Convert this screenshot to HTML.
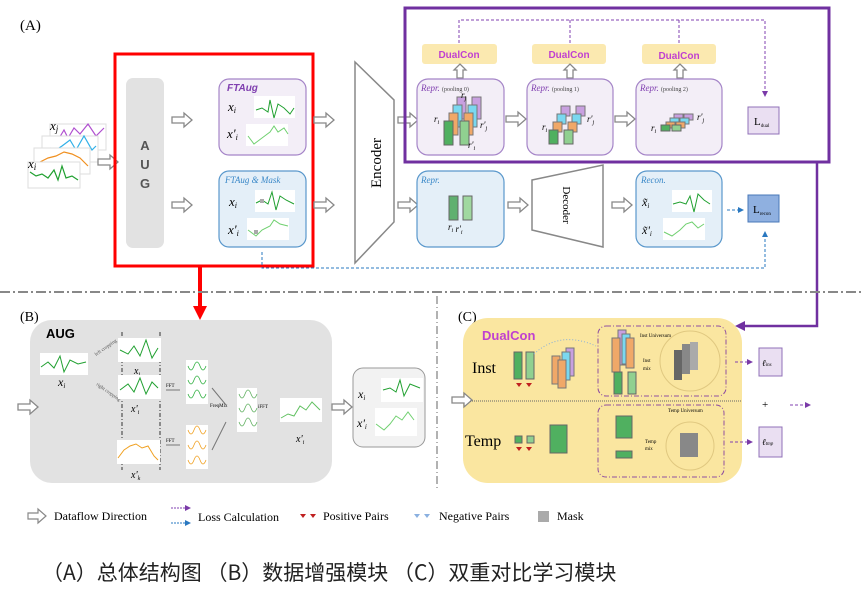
<!DOCTYPE html>
<html><head><meta charset="utf-8"><style>
html,body{margin:0;padding:0;background:#fff;}
svg{display:block;font-family:"Liberation Serif",serif;}
.sans{font-family:"Liberation Sans",sans-serif;}
</style></head><body>
<svg width="864" height="592" viewBox="0 0 864 592" xmlns="http://www.w3.org/2000/svg">
<defs>
<marker id="pa" markerWidth="6" markerHeight="6" refX="5" refY="3" orient="auto"><path d="M0,0 L6,3 L0,6z" fill="#7a3aa8"/></marker>
<marker id="ba" markerWidth="6" markerHeight="6" refX="5" refY="3" orient="auto"><path d="M0,0 L6,3 L0,6z" fill="#2a78c0"/></marker>
<g id="harr"><path d="M0,-3 H12 V-7 L20,0 L12,7 V3 H0z" fill="#fff" stroke="#888" stroke-width="1.3"/></g>
<g id="uarr"><path d="M-3,8 V0 H-6 L0,-6 L6,0 H3 V8z" fill="#fff" stroke="#888" stroke-width="1.3"/></g>
</defs>

<text x="20" y="30" font-size="15">(A)</text>

<g>
<rect x="50" y="124" width="56" height="26" fill="#fff" stroke="#ddd"/>
<polyline points="58,140 64,130 68,138 74,128 80,134 88,124 96,136 104,128" fill="none" stroke="#b050d0" stroke-width="1.2"/>
<rect x="42" y="136" width="56" height="26" fill="#fff" stroke="#ddd"/>
<polyline points="50,148 56,150 62,146 70,140 76,150 84,136 92,150 96,146" fill="none" stroke="#30b0e8" stroke-width="1.2"/>
<rect x="34" y="148" width="56" height="26" fill="#fff" stroke="#ddd"/>
<polyline points="40,162 48,158 56,156 64,152 72,154 80,158 88,166" fill="none" stroke="#f09020" stroke-width="1.2"/>
<rect x="28" y="162" width="52" height="26" fill="#fff" stroke="#ddd"/>
<polyline points="30,172 36,176 42,174 48,178 54,170 58,180 62,166 66,178 72,176 78,180" fill="none" stroke="#20a030" stroke-width="1.2"/>
<text x="50" y="130" font-size="13" font-style="italic">x<tspan font-size="9" dy="2">j</tspan></text>
<text x="28" y="168" font-size="13" font-style="italic">x<tspan font-size="9" dy="2">i</tspan></text>
<use href="#harr" x="98" y="162"/>
</g>

<rect x="115" y="54" width="198" height="212" fill="none" stroke="#f00" stroke-width="3"/>
<rect x="126" y="78" width="38" height="170" rx="7" fill="#e2e2e2"/>
<text x="145" y="150" font-size="13" font-weight="bold" class="sans" text-anchor="middle" fill="#555">A</text>
<text x="145" y="169" font-size="13" font-weight="bold" class="sans" text-anchor="middle" fill="#555">U</text>
<text x="145" y="188" font-size="13" font-weight="bold" class="sans" text-anchor="middle" fill="#555">G</text>
<use href="#harr" x="172" y="120"/>
<use href="#harr" x="172" y="205"/>

<rect x="219" y="79" width="87" height="76" rx="10" fill="#f3eef7" stroke="#a585c8" stroke-width="1.2"/>
<text x="227" y="91" font-size="10" font-style="italic" font-weight="bold" class="sans" fill="#8040b0">FTAug</text>
<text x="228" y="111" font-size="13" font-style="italic">x<tspan font-size="8" dy="2">i</tspan></text>
<text x="227" y="138" font-size="13" font-style="italic">x'<tspan font-size="8" dy="2">i</tspan></text>
<rect x="254" y="96" width="41" height="22" fill="#fff"/>
<polyline points="256,110 262,108 268,112 270,100 274,118 278,104 284,108 290,114 294,108" fill="none" stroke="#20a030" stroke-width="1"/>
<rect x="246" y="124" width="42" height="22" fill="#fff"/>
<polyline points="248,136 254,144 262,138 270,132 274,126 278,132 284,128 288,134" fill="none" stroke="#70d070" stroke-width="1"/>

<rect x="219" y="171" width="87" height="76" rx="10" fill="#e4eff8" stroke="#5a98cc" stroke-width="1.2"/>
<text x="225" y="183" font-size="9" font-style="italic" fill="#3a88c8">FTAug &amp; Mask</text>
<text x="229" y="206" font-size="13" font-style="italic">x<tspan font-size="8" dy="2">i</tspan></text>
<text x="228" y="234" font-size="13" font-style="italic">x'<tspan font-size="8" dy="2">i</tspan></text>
<rect x="255" y="190" width="40" height="22" fill="#fff"/>
<polyline points="256,203 262,200 268,204 272,192 276,210 280,196 286,200 294,204" fill="none" stroke="#20a030" stroke-width="1"/>
<rect x="247" y="218" width="42" height="22" fill="#fff"/>
<polyline points="248,230 256,236 262,230 270,226 274,220 280,224 288,226" fill="none" stroke="#70d070" stroke-width="1"/>
<rect x="260" y="199" width="4" height="4" fill="#aaa"/><rect x="254" y="230" width="4" height="4" fill="#aaa"/>

<use href="#harr" x="314" y="120"/>
<use href="#harr" x="314" y="205"/>

<polygon points="355,62 394,100 394,222 355,263" fill="#fff" stroke="#888" stroke-width="1.5"/>
<text transform="translate(381,163) rotate(-90)" font-size="15" text-anchor="middle">Encoder</text>

<use href="#harr" x="398" y="120"/>
<use href="#harr" x="398" y="205"/>

<rect x="405" y="8" width="424" height="154" fill="none" stroke="#7030a0" stroke-width="3"/>
<path d="M459,43 V20 H765 V96" fill="none" stroke="#8040b0" stroke-dasharray="3,2" marker-end="url(#pa)"/>
<path d="M570,20 V43 M679,20 V43" stroke="#8040b0" stroke-dasharray="3,2"/>

<g class="sans" font-size="10" font-weight="bold" fill="#c040d0" text-anchor="middle">
<rect x="422" y="44" width="75" height="20" rx="3" fill="#fbe9b0"/><text x="459" y="58">DualCon</text>
<rect x="532" y="44" width="74" height="20" rx="3" fill="#fbe9b0"/><text x="569" y="58">DualCon</text>
<rect x="642" y="44" width="74" height="20" rx="3" fill="#fbe9b0"/><text x="679" y="59">DualCon</text>
</g>
<use href="#uarr" x="460" y="70"/><use href="#uarr" x="570" y="70"/><use href="#uarr" x="680" y="70"/>

<g>
<rect x="417" y="79" width="87" height="76" rx="11" fill="#f3eef7" stroke="#a585c8" stroke-width="1.2"/>
<text x="421" y="91" font-size="9" font-style="italic" fill="#8040b0">Repr. <tspan font-size="6" font-style="normal" fill="#444">(pooling 0)</tspan></text>
<rect x="457" y="97" width="9" height="22" fill="#c8a0e0" stroke="#777"/><rect x="472" y="97" width="9" height="22" fill="#c8a0e0" stroke="#777"/>
<rect x="453" y="105" width="9" height="22" fill="#7ad8f0" stroke="#777"/><rect x="468" y="105" width="9" height="22" fill="#7ad8f0" stroke="#777"/>
<rect x="449" y="113" width="9" height="22" fill="#f0a868" stroke="#777"/><rect x="464" y="113" width="9" height="22" fill="#f0a868" stroke="#777"/>
<rect x="444" y="121" width="9" height="24" fill="#50b060" stroke="#666"/><rect x="460" y="121" width="9" height="24" fill="#90d090" stroke="#666"/>
<text x="434" y="122" font-size="9" font-style="italic">r<tspan font-size="6" dy="2">i</tspan></text>
<text x="480" y="128" font-size="9" font-style="italic">r'<tspan font-size="6" dy="2">j</tspan></text>
<text x="468" y="148" font-size="9" font-style="italic">r'<tspan font-size="6" dy="2">i</tspan></text>
<text x="461" y="98" font-size="9" font-style="italic">r<tspan font-size="6" dy="2">j</tspan></text>
</g>
<use href="#harr" x="506" y="119"/>
<g>
<rect x="527" y="79" width="86" height="76" rx="11" fill="#f3eef7" stroke="#a585c8" stroke-width="1.2"/>
<text x="531" y="91" font-size="9" font-style="italic" fill="#8040b0">Repr. <tspan font-size="6" font-style="normal" fill="#444">(pooling 1)</tspan></text>
<rect x="561" y="106" width="9" height="10" fill="#c8a0e0" stroke="#777"/><rect x="576" y="106" width="9" height="10" fill="#c8a0e0" stroke="#777"/>
<rect x="557" y="114" width="9" height="10" fill="#7ad8f0" stroke="#777"/><rect x="572" y="114" width="9" height="10" fill="#7ad8f0" stroke="#777"/>
<rect x="553" y="122" width="9" height="10" fill="#f0a868" stroke="#777"/><rect x="568" y="122" width="9" height="10" fill="#f0a868" stroke="#777"/>
<rect x="549" y="130" width="9" height="14" fill="#50b060" stroke="#666"/><rect x="564" y="130" width="9" height="14" fill="#90d090" stroke="#666"/>
<text x="542" y="130" font-size="9" font-style="italic">r<tspan font-size="6" dy="2">i</tspan></text>
<text x="587" y="122" font-size="9" font-style="italic">r'<tspan font-size="6" dy="2">j</tspan></text>
</g>
<use href="#harr" x="615" y="119"/>
<g>
<rect x="636" y="79" width="86" height="76" rx="11" fill="#f3eef7" stroke="#a585c8" stroke-width="1.2"/>
<text x="640" y="91" font-size="9" font-style="italic" fill="#8040b0">Repr. <tspan font-size="6" font-style="normal" fill="#444">(pooling 2)</tspan></text>
<rect x="674" y="114" width="9" height="6" fill="#c8a0e0" stroke="#777"/><rect x="684" y="114" width="9" height="6" fill="#c8a0e0" stroke="#777"/>
<rect x="670" y="118" width="9" height="6" fill="#7ad8f0" stroke="#777"/><rect x="680" y="118" width="9" height="6" fill="#7ad8f0" stroke="#777"/>
<rect x="666" y="122" width="9" height="6" fill="#f0a868" stroke="#777"/><rect x="676" y="122" width="9" height="6" fill="#f0a868" stroke="#777"/>
<rect x="661" y="125" width="9" height="6" fill="#50b060" stroke="#666"/><rect x="672" y="125" width="9" height="6" fill="#90d090" stroke="#666"/>
<text x="651" y="131" font-size="9" font-style="italic">r<tspan font-size="6" dy="2">i</tspan></text>
<text x="697" y="120" font-size="9" font-style="italic">r'<tspan font-size="6" dy="2">j</tspan></text>
</g>
<rect x="748" y="107" width="31" height="27" fill="#eadff2" stroke="#9070b8"/>
<text x="754" y="125" font-size="11">L<tspan font-size="5" dy="2">dual</tspan></text>

<rect x="417" y="171" width="87" height="76" rx="11" fill="#e4eff8" stroke="#5a98cc" stroke-width="1.2"/>
<text x="421" y="183" font-size="9" font-style="italic" fill="#3a88c8">Repr.</text>
<rect x="449" y="196" width="9" height="24" fill="#60b070" stroke="#666"/><rect x="463" y="196" width="9" height="24" fill="#a0d8a0" stroke="#666"/>
<text x="448" y="230" font-size="9" font-style="italic">r<tspan font-size="6" dy="2">i</tspan> r'<tspan font-size="6" dy="2">i</tspan></text>
<use href="#harr" x="508" y="205"/>
<polygon points="532,180 603,165 603,247 532,230" fill="#fff" stroke="#888" stroke-width="1.5"/>
<text transform="translate(563,205) rotate(90)" font-size="11" text-anchor="middle">Decoder</text>
<use href="#harr" x="612" y="205"/>
<rect x="636" y="171" width="86" height="76" rx="11" fill="#e4eff8" stroke="#5a98cc" stroke-width="1.2"/>
<text x="641" y="183" font-size="9" font-style="italic" fill="#3a88c8">Recon.</text>
<text x="642" y="206" font-size="12" font-style="italic">x̃<tspan font-size="7" dy="2">i</tspan></text>
<text x="642" y="234" font-size="12" font-style="italic">x̃'<tspan font-size="7" dy="2">i</tspan></text>
<rect x="672" y="190" width="40" height="22" fill="#fff"/>
<polyline points="673,204 680,202 686,204 690,196 694,212 698,194 704,200 710,204" fill="none" stroke="#20a030" stroke-width="1"/>
<rect x="663" y="218" width="42" height="22" fill="#fff"/>
<polyline points="664,232 672,236 680,230 686,224 692,222 698,228 704,224" fill="none" stroke="#70d070" stroke-width="1"/>
<path d="M727,210 H743" stroke="#2a78c0" stroke-dasharray="3,2" marker-end="url(#ba)"/>
<rect x="748" y="195" width="31" height="27" fill="#8fb0e0" stroke="#4a78b8"/>
<text x="753" y="213" font-size="11">L<tspan font-size="5" dy="2">recon</tspan></text>
<path d="M262,252 V268 H765 V232" fill="none" stroke="#2a78c0" stroke-dasharray="3,2" marker-end="url(#ba)"/>

<path d="M817,162 V326 H740" fill="none" stroke="#7030a0" stroke-width="2.5"/>
<path d="M735,326 L745,321 L745,331z" fill="#7030a0"/>

<path d="M200,266 V310" stroke="#f00" stroke-width="4"/>
<path d="M193,306 L207,306 L200,320z" fill="#f00"/>

<line x1="0" y1="292" x2="864" y2="292" stroke="#888" stroke-width="2" stroke-dasharray="10,3,2,3"/>
<line x1="437" y1="296" x2="437" y2="490" stroke="#666" stroke-width="1" stroke-dasharray="8,3,1,3"/>

<text x="20" y="321" font-size="14">(B)</text>
<rect x="30" y="320" width="302" height="163" rx="22" fill="#e2e2e2"/>
<text x="46" y="338" font-size="13" font-weight="bold" class="sans">AUG</text>
<use href="#harr" x="18" y="407"/>
<rect x="40" y="353" width="48" height="22" fill="#fff"/>
<polyline points="41,367 48,362 54,368 60,356 64,372 70,360 78,364 86,362" fill="none" stroke="#20a030" stroke-width="1"/>
<text x="58" y="386" font-size="12" font-style="italic">x<tspan font-size="7" dy="2">i</tspan></text>
<line x1="122" y1="332" x2="122" y2="470" stroke="#333" stroke-dasharray="4,2,1,2"/>
<line x1="160" y1="332" x2="160" y2="470" stroke="#333" stroke-dasharray="4,2,1,2"/>
<text x="96" y="356" font-size="5" fill="#555" transform="rotate(-35 96 356)">left cropping</text>
<text x="96" y="385" font-size="5" fill="#555" transform="rotate(35 96 385)">right cropping</text>
<rect x="118" y="338" width="43" height="24" fill="#fff"/>
<polyline points="120,350 128,354 134,346 140,356 146,340 152,358 158,348" fill="none" stroke="#20a030" stroke-width="1"/>
<text x="134" y="374" font-size="10" font-style="italic">x<tspan font-size="6" dy="2">i</tspan></text>
<rect x="118" y="375" width="43" height="24" fill="#fff"/>
<polyline points="120,390 128,384 134,392 140,378 146,394 152,382 158,388" fill="none" stroke="#20a030" stroke-width="1"/>
<text x="131" y="412" font-size="10" font-style="italic">x'<tspan font-size="6" dy="2">i</tspan></text>
<rect x="117" y="440" width="43" height="24" fill="#fff"/>
<polyline points="118,458 124,450 130,446 136,444 142,448 148,446 154,456 158,460" fill="none" stroke="#f0a020" stroke-width="1"/>
<text x="131" y="478" font-size="10" font-style="italic">x'<tspan font-size="6" dy="2">k</tspan></text>
<text x="166" y="387" font-size="5">FFT</text><text x="166" y="442" font-size="5">FFT</text>
<path d="M166,390 H180 M166,445 H180" stroke="#777"/>
<rect x="186" y="360" width="22" height="44" fill="#fff"/>
<path d="M188,366 q3,8 6,0 t6,0 t6,0 M188,380 q3,8 6,0 t6,0 t6,0 M188,394 q3,8 6,0 t6,0 t6,0" fill="none" stroke="#30b040" stroke-width="0.8"/>
<rect x="186" y="425" width="22" height="44" fill="#fff"/>
<path d="M188,430 q3,8 6,0 t6,0 t6,0 M188,445 q3,8 6,0 t6,0 t6,0 M188,460 q3,8 6,0 t6,0 t6,0" fill="none" stroke="#f0a020" stroke-width="0.8"/>
<text x="210" y="407" font-size="5">FreqMix</text>
<path d="M212,388 L226,405 M212,450 L226,422" stroke="#777"/>
<rect x="237" y="388" width="20" height="44" fill="#fff"/>
<path d="M239,394 q3,8 6,0 t6,0 t6,0 M239,408 q3,8 6,0 t6,0 t6,0 M239,422 q3,8 6,0 t6,0 t6,0" fill="none" stroke="#60b060" stroke-width="0.8"/>
<text x="258" y="408" font-size="5">iFFT</text>
<rect x="280" y="398" width="42" height="24" fill="#fff"/>
<polyline points="281,418 288,414 294,416 300,406 306,410 312,402 320,410" fill="none" stroke="#60c060" stroke-width="1"/>
<text x="296" y="442" font-size="10" font-style="italic">x'<tspan font-size="6" dy="2">i</tspan></text>
<use href="#harr" x="332" y="407"/>
<rect x="353" y="368" width="72" height="79" rx="10" fill="#f2f2f2" stroke="#999"/>
<text x="358" y="398" font-size="12" font-style="italic">x<tspan font-size="7" dy="2">i</tspan></text>
<text x="357" y="427" font-size="12" font-style="italic">x'<tspan font-size="7" dy="2">i</tspan></text>
<rect x="381" y="378" width="42" height="24" fill="#fff"/>
<polyline points="383,390 390,388 396,392 400,380 404,396 410,384 420,388" fill="none" stroke="#20a030" stroke-width="1"/>
<rect x="375" y="408" width="42" height="28" fill="#fff"/>
<polyline points="376,424 384,430 390,424 396,416 402,420 408,412 414,420" fill="none" stroke="#70d070" stroke-width="1"/>

<text x="458" y="321" font-size="14">(C)</text>
<rect x="463" y="318" width="279" height="165" rx="25" fill="#fae6a0"/>
<use href="#harr" x="452" y="400"/>
<line x1="470" y1="401" x2="742" y2="401" stroke="#666" stroke-dasharray="1,1"/>
<text x="482" y="340" font-size="13" font-weight="bold" class="sans" fill="#c040d0">DualCon</text>
<text x="472" y="373" font-size="16">Inst</text>
<text x="465" y="446" font-size="16">Temp</text>
<rect x="514" y="352" width="8" height="27" fill="#50b060" stroke="#666"/><rect x="526" y="352" width="8" height="27" fill="#90d090" stroke="#666"/>
<path d="M516,383 l3,4 l3,-4z M526,383 l3,4 l3,-4z" fill="#c02020"/>
<rect x="566" y="348" width="8" height="28" fill="#c8a0e0" stroke="#777"/><rect x="562" y="352" width="8" height="28" fill="#7ad8f0" stroke="#777"/><rect x="552" y="356" width="8" height="28" fill="#f0a868" stroke="#777"/><rect x="558" y="360" width="8" height="28" fill="#f0a868" stroke="#777"/>
<path d="M534,354 Q560,330 596,346" fill="none" stroke="#8ab0d8" stroke-dasharray="1,2"/>
<rect x="598" y="326" width="128" height="70" rx="8" fill="none" stroke="#9050a0" stroke-dasharray="5,2,1,2"/>
<text x="640" y="337" font-size="5">Inst Universum</text>
<rect x="618" y="330" width="8" height="35" fill="#c8a0e0" stroke="#777"/><rect x="622" y="334" width="8" height="30" fill="#7ad8f0" stroke="#777"/><rect x="612" y="338" width="8" height="34" fill="#f0a868" stroke="#777"/><rect x="626" y="338" width="8" height="30" fill="#f0a868" stroke="#777"/>
<rect x="614" y="372" width="8" height="22" fill="#50b060" stroke="#666"/><rect x="628" y="372" width="8" height="22" fill="#90d090" stroke="#666"/>
<text x="643" y="362" font-size="5">Inst</text><text x="643" y="370" font-size="5">mix</text>
<circle cx="690" cy="361" r="30" fill="none" stroke="#e0c880"/>
<rect x="674" y="350" width="8" height="30" fill="#666"/><rect x="682" y="344" width="8" height="30" fill="#888"/><rect x="690" y="342" width="8" height="28" fill="#aaa"/>
<rect x="759" y="348" width="23" height="28" fill="#eadff2" stroke="#9070b8"/>
<text x="762" y="366" font-size="9" font-style="italic">ℓ<tspan font-size="5">ins</tspan></text>
<path d="M735,362 H752" stroke="#8040b0" stroke-dasharray="3,2" marker-end="url(#pa)"/>
<text x="762" y="408" font-size="11">+</text>
<path d="M790,405 H810" stroke="#8040b0" stroke-dasharray="3,2" marker-end="url(#pa)"/>
<rect x="515" y="436" width="7" height="7" fill="#50b060" stroke="#666"/><rect x="527" y="436" width="7" height="7" fill="#90d090" stroke="#666"/>
<path d="M516,447 l3,4 l3,-4z M526,447 l3,4 l3,-4z" fill="#c02020"/>
<rect x="550" y="425" width="17" height="28" fill="#50b060" stroke="#666"/>
<rect x="598" y="405" width="126" height="72" rx="8" fill="none" stroke="#9050a0" stroke-dasharray="5,2,1,2"/>
<text x="668" y="412" font-size="5">Temp Universum</text>
<rect x="616" y="416" width="16" height="22" fill="#50b060" stroke="#666"/><rect x="616" y="451" width="16" height="7" fill="#50b060" stroke="#666"/>
<text x="645" y="443" font-size="5">Temp</text><text x="645" y="450" font-size="5">mix</text>
<circle cx="690" cy="446" r="24" fill="none" stroke="#e0c880"/>
<rect x="680" y="433" width="18" height="24" fill="#888"/>
<rect x="759" y="427" width="23" height="30" fill="#eadff2" stroke="#9070b8"/>
<text x="762" y="445" font-size="9" font-style="italic">ℓ<tspan font-size="5">tmp</tspan></text>
<path d="M730,442 H752" stroke="#8040b0" stroke-dasharray="3,2" marker-end="url(#pa)"/>

<path d="M28,513 H38 V509 L46,516 L38,523 V519 H28z" fill="#fff" stroke="#888" stroke-width="1.2"/>
<text x="54" y="520" font-size="12">Dataflow Direction</text>
<path d="M171,508 H190" stroke="#8040b0" stroke-dasharray="2,1" marker-end="url(#pa)"/>
<path d="M171,523 H190" stroke="#2a78c0" stroke-dasharray="2,1" marker-end="url(#ba)"/>
<text x="198" y="521" font-size="12">Loss Calculation</text>
<path d="M300,514 l3,4 l3,-4z M310,514 l3,4 l3,-4z" fill="#c02020"/>
<text x="323" y="520" font-size="12">Positive Pairs</text>
<path d="M414,514 l3,4 l3,-4z M424,514 l3,4 l3,-4z" fill="#8ab0e0"/>
<text x="439" y="520" font-size="12">Negative Pairs</text>
<rect x="538" y="511" width="11" height="11" fill="#aaa"/>
<text x="557" y="520" font-size="12">Mask</text>

<text x="42" y="580" font-size="21" fill="#222" font-family="'Noto Sans CJK SC','WenQuanYi Zen Hei',sans-serif">（A）总体结构图 （B）数据增强模块 （C）双重对比学习模块</text>
</svg>
</body></html>
